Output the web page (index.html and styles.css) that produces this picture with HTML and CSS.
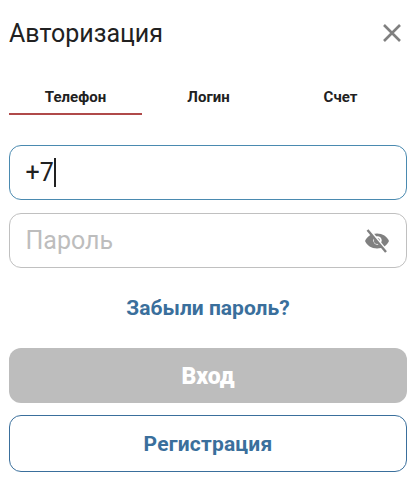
FILE: index.html
```html
<!DOCTYPE html>
<html lang="ru">
<head>
<meta charset="utf-8">
<title>Авторизация</title>
<link rel="stylesheet" href="styles.css">
</head>
<body>
<main class="dialog">
  <header class="head">
    <h1 class="title">Авторизация</h1>
    <button class="close" aria-label="Закрыть">
      <svg width="20" height="20" viewBox="0 0 20 20"><path d="M2 2 18 18M18 2 2 18" fill="none" stroke="#808080" stroke-width="2.6"/></svg>
    </button>
  </header>
  <nav class="tabs">
    <div class="tab active">Телефон</div>
    <div class="tab">Логин</div>
    <div class="tab">Счет</div>
  </nav>
  <div class="field focus"><span class="value">+7</span><span class="caret"></span></div>
  <div class="field second">
    <span class="placeholder">Пароль</span>
    <svg class="eye" width="26" height="24" viewBox="0 0 26 24"><path fill="#808080" d="M13 4.500C7.500 4.500 2.800 7.600 1 12c1.800 4.400 6.500 7.500 12 7.500s10.200-3.100 12-7.500c-1.800-4.400-6.500-7.500-12-7.500z"/><circle cx="13.500" cy="11.500" r="4.200" fill="#fff"/><circle cx="13" cy="12" r="3" fill="#808080"/><path d="M5 1 23 23" stroke="#fff" stroke-width="3.200"/><path d="M3.500 1 22 23" stroke="#808080" stroke-width="2.400"/></svg>
  </div>
  <a class="forgot">Забыли пароль?</a>
  <button class="btn login">Вход</button>
  <button class="btn register">Регистрация</button>
</main>
</body>
</html>
```
FILE: styles.css
```css
* { box-sizing: border-box; }
html, body { margin: 0; background: #fff; }
body { font-family: Roboto, "Liberation Sans", sans-serif; width: 417px; height: 481px; overflow: hidden; }
.dialog { padding: 0 10px 0 9px; display: flex; flex-direction: column; }
.head { height: 66px; display: flex; align-items: center; justify-content: space-between; }
.title { margin: 0; font-size: 25px; font-weight: 400; color: #212121; }
.close { border: 0; background: none; padding: 0; margin-right: 5px; width: 20px; height: 20px; }
.close svg { display: block; }
.tabs { display: grid; grid-template-columns: 133px 133px 131px; height: 49px; }
.tab { font-size: 15px; font-weight: 700; color: #212121; text-align: center; padding-top: 22px; height: 49px; }
.tab.active { border-bottom: 2px solid #b04a4a; }
.field { margin-top: 30px; height: 55px; border: 1px solid #c0c0c0; border-radius: 12px; padding: 0 15.5px; display: flex; align-items: center; font-size: 25px; }
.field.focus { border-color: #4a8ab0; }
.field.second { margin-top: 13px; justify-content: space-between; padding-right: 16px; }
.value { color: #212121; }
.caret { width: 2px; height: 29px; background: #212121; }
.placeholder { color: #bdbdbd; }
.eye { display: block; }
.forgot { margin-top: 28px; height: 24px; line-height: 24px; text-align: center; font-size: 21px; font-weight: 700; color: #3a6f9c; }
.btn { display: block; width: 100%; font-family: inherit; font-weight: 700; border-radius: 12px; font-size: 21px; }
.login { margin-top: 28px; height: 55px; border: 0; padding-top: 3px; background: #bdbdbd; color: #fff; font-weight: 900; font-size: 23px; }
.register { margin-top: 12px; height: 57px; background: #fff; border: 1px solid #3a6f9c; color: #3a6f9c; letter-spacing: .2px; }
```
